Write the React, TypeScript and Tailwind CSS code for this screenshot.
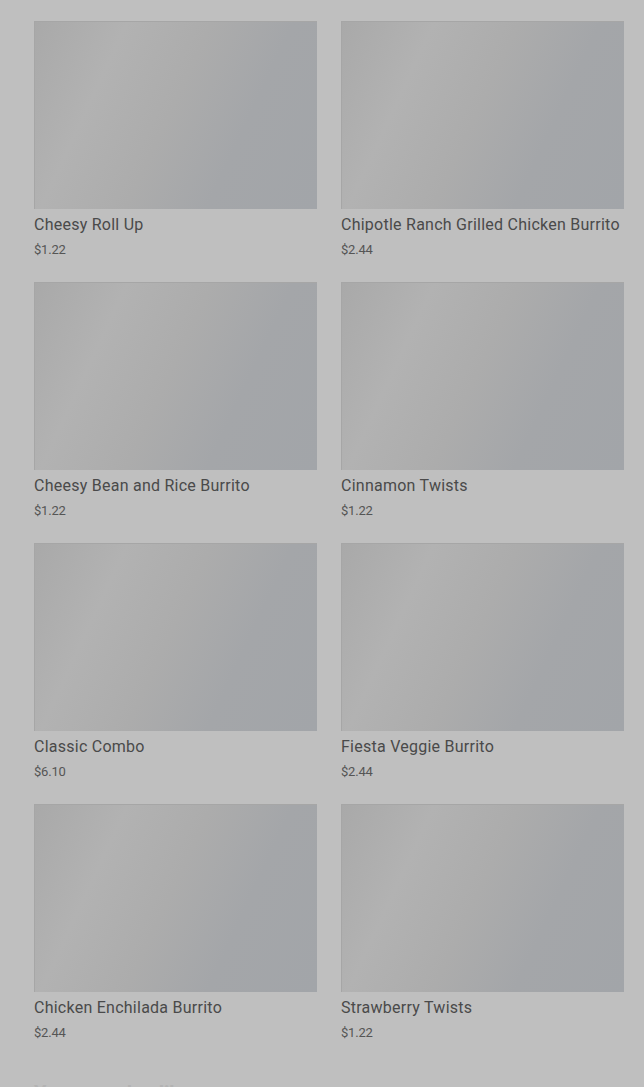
import React from "react";

const items = [
  { name: "Cheesy Roll Up", price: "$1.22" },
  { name: "Chipotle Ranch Grilled Chicken Burrito", price: "$2.44" },
  { name: "Cheesy Bean and Rice Burrito", price: "$1.22" },
  { name: "Cinnamon Twists", price: "$1.22" },
  { name: "Classic Combo", price: "$6.10" },
  { name: "Fiesta Veggie Burrito", price: "$2.44" },
  { name: "Chicken Enchilada Burrito", price: "$2.44" },
  { name: "Strawberry Twists", price: "$1.22" },
];

export default function App() {
  return (
    <div
      className="min-h-[1087px] w-[644px] overflow-hidden bg-[#bfbfbf] pl-[34px] pr-[20px] pt-[21px]"
      style={{ fontFamily: "Roboto, 'Liberation Sans', sans-serif" }}
    >
      <div className="grid grid-cols-2 gap-x-[24px] gap-y-[22px]">
        {items.map((it) => (
          <div key={it.name} className="flex flex-col">
            <div className="h-[188px] w-full border-t border-l border-[#a6a6a6] bg-[linear-gradient(115deg,#a9a9a9_0%,#b2b2b2_25%,#acacac_48%,#a4a6a9_70%,#a2a5a9_100%)]" />
            <div className="mt-[4px] whitespace-nowrap text-[16px] leading-[24px] tracking-[0.25px] text-[#4a4a4a]">
              {it.name}
            </div>
            <div className="mt-[3px] text-[13px] leading-[20px] tracking-[-0.2px] text-[#555555]">
              {it.price}
            </div>
          </div>
        ))}
      </div>
      <div className="mt-[36px] text-[20px] font-bold leading-[28px] text-[#b3b3b3]">
        You may also like
      </div>
    </div>
  );
}
